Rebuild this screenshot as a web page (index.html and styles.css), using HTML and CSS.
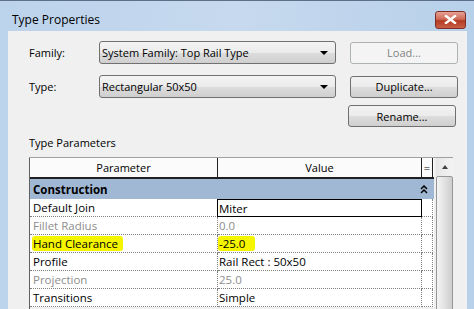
FILE: index.html
```html
<!DOCTYPE html>
<html lang="en">
<head>
  <meta charset="UTF-8" />
  <title>Type Properties</title>
  <link rel="stylesheet" href="styles.css">
</head>
<body>

  <!-- dialog window -->
  <div class="window">
    <div class="titlebar">
      <span class="title">Type Properties</span>
      <div class="close">
        <svg width="13" height="9" viewBox="0 0 13 9">
          <path d="M2 1 L11 8 M11 1 L2 8" stroke="#fff" stroke-width="2.4" stroke-linecap="square"/>
        </svg>
      </div>
    </div>

    <div class="body">
      <div class="row row-family">
        <span class="lbl">Family:</span>
        <div class="select">System Family: Top Rail Type<span class="arrow"></span></div>
        <div class="btn disabled">Load...</div>
      </div>
      <div class="row row-type">
        <span class="lbl">Type:</span>
        <div class="select">Rectangular 50x50<span class="arrow"></span></div>
        <div class="btn">Duplicate...</div>
      </div>
      <div class="row row-rename">
        <div class="btn">Rename...</div>
      </div>

      <div class="section-label">Type Parameters</div>

      <div class="grid-area">
        <div class="table">
          <div class="head">
            <div class="hcell">Parameter</div>
            <div class="hcell">Value</div>
            <div class="hcell eq">=</div>
          </div>
          <div class="group">
            <span>Construction</span>
            <svg class="collapse" width="8" height="9" viewBox="0 0 8 9">
              <path d="M1 4 L4 1 L7 4 M1 8 L4 5 L7 8" stroke="#000" stroke-width="1.5" fill="none"/>
            </svg>
          </div>
          <div class="prow">
            <div class="pcell">Default Join</div>
            <div class="pcell vcell editing">Miter</div>
            <div class="pcell ecell"></div>
          </div>
          <div class="prow muted">
            <div class="pcell">Fillet Radius</div>
            <div class="pcell vcell">0.0</div>
            <div class="pcell ecell"></div>
          </div>
          <div class="prow">
            <div class="pcell"><mark>Hand Clearance</mark></div>
            <div class="pcell vcell"><mark class="short">-25.0</mark></div>
            <div class="pcell ecell"></div>
          </div>
          <div class="prow">
            <div class="pcell">Profile</div>
            <div class="pcell vcell">Rail Rect : 50x50</div>
            <div class="pcell ecell"></div>
          </div>
          <div class="prow muted">
            <div class="pcell">Projection</div>
            <div class="pcell vcell">25.0</div>
            <div class="pcell ecell"></div>
          </div>
          <div class="prow">
            <div class="pcell">Transitions</div>
            <div class="pcell vcell">Simple</div>
            <div class="pcell ecell"></div>
          </div>
        </div>

        <div class="scrollbar">
          <div class="up"></div>
          <div class="thumb"></div>
        </div>
      </div>
    </div>
  </div>

</body>
</html>
```

FILE: styles.css
```css
body {
  margin: 0;
  font-family: 'Segoe UI', 'Open Sans', sans-serif;
  font-size: 11px;
  color: #000;
  background-color: #b9d1ea;
}

.window {
  width: 474px;
  height: 309px;
  overflow: hidden;
  background: linear-gradient(to right, #bcd3ec, #c6d9ee 50%, #b8d0ea);
  border-top: 1px solid #5d7088;
  box-sizing: border-box;
  padding: 0 7px 0 8px;
}

.titlebar {
  height: 30px;
  display: flex;
  align-items: center;
  justify-content: space-between;
  padding-left: 4px;
}

.title {
  font-size: 12px;
  margin-top: 7px;
}

.close {
  width: 29px;
  height: 16px;
  margin-top: 7px;
  margin-right: 1px;
  border: 1px solid #7e2f25;
  border-radius: 3px;
  background: linear-gradient(to bottom, #e6a295, #cf6a56 45%, #b33a22 55%, #c9604a);
  display: flex;
  align-items: center;
  justify-content: center;
}

.body {
  background-color: #f0f0f0;
  height: 278px;
  padding-left: 21px;
  box-sizing: border-box;
  overflow: hidden;
}

.row {
  display: flex;
  align-items: center;
}

.row-family {
  padding-top: 10px;
}

.row-type {
  margin-top: 11px;
}

.row-rename {
  margin-top: 7px;
  padding-left: 319px;
}

.lbl {
  width: 70px;
}

.select {
  width: 233px;
  height: 21px;
  border: 1px solid #707070;
  border-radius: 3px;
  background: linear-gradient(to bottom, #f4f4f4, #ebebeb 50%, #dddddd 51%, #cfcfcf);
  display: flex;
  align-items: center;
  padding-left: 2px;
  box-sizing: content-box;
  position: relative;
  margin-right: 14px;
}

.arrow {
  position: absolute;
  right: 7px;
  top: 9px;
  border-left: 4px solid transparent;
  border-right: 4px solid transparent;
  border-top: 4px solid #000;
}

.btn {
  width: 106px;
  height: 20px;
  border: 1px solid #707070;
  border-radius: 3px;
  background: linear-gradient(to bottom, #f2f2f2, #ebebeb 50%, #dddddd 51%, #cfcfcf);
  display: flex;
  align-items: center;
  justify-content: center;
}

.btn.disabled {
  border-color: #adb2b5;
  background: #f4f4f4;
  color: #838383;
}

.section-label {
  margin-top: 8px;
  height: 15px;
  line-height: 15px;
}

.grid-area {
  margin-top: 7px;
  display: flex;
  border-top: 1px solid #a0a0a0;
  width: 424px;
}

.table {
  width: 404px;
  border-left: 1px solid #606060;
  font-size: 11.5px;
}

.head {
  display: grid;
  grid-template-columns: 188px 204px 11px;
  height: 19px;
  border-bottom: 2px solid #202020;
  background-color: #fbfbfb;
  font-size: 11px;
}

.hcell {
  display: flex;
  align-items: center;
  justify-content: center;
  border-right: 1px solid #202020;
}

.group {
  height: 20px;
  background-color: #a0b8d4;
  font-weight: bold;
  display: flex;
  align-items: center;
  justify-content: space-between;
  padding-left: 3px;
  padding-right: 5px;
  border-right: 1px solid #a0b8d4;
}

.prow {
  display: grid;
  grid-template-columns: 188px 204px 11px;
  height: 18px;
  background-color: #fff;
}

.pcell {
  display: flex;
  align-items: center;
  padding-left: 3px;
  border-right: 1px dotted #808080;
  border-bottom: 1px dotted #808080;
  overflow: hidden;
  white-space: nowrap;
}

.vcell {
  padding-left: 1px;
}

.ecell {
  padding-left: 0;
}

.editing {
  border: 1px solid #000;
  margin-left: -1px;
}

.muted {
  color: #8d8d8d;
}

mark {
  display: inline-block;
  height: 15px;
  line-height: 15px;
  background-color: #f5f500;
  color: #000;
  border-radius: 3px;
  padding: 0 5px 0 1px;
  margin-left: -1px;
}

mark.short {
  padding-right: 10px;
}

.scrollbar {
  width: 17px;
  margin-left: 2px;
  background: linear-gradient(to right, #e6e6e6, #f3f3f3);
}

.up {
  margin: 7px auto 0;
  width: 0;
  border-left: 3px solid transparent;
  border-right: 3px solid transparent;
  border-bottom: 4px solid #404040;
}

.thumb {
  margin-top: 7px;
  height: 200px;
  border: 1px solid #969696;
  border-radius: 2px;
  background: linear-gradient(to right, #f4f4f4, #e2e2e2 50%, #cdcdcd);
}
```
